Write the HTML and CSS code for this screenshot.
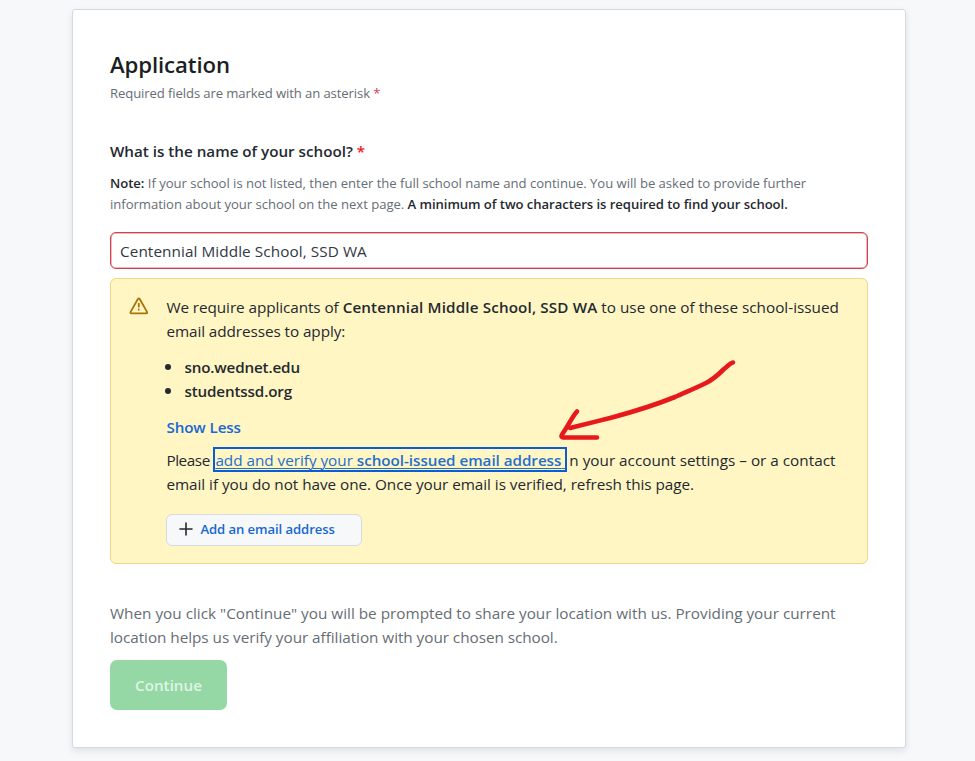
FILE: index.html
```html
<!DOCTYPE html>
<html lang="en">
<head>
<meta charset="utf-8">
<title>Application</title>
<link rel="stylesheet" href="styles.css">
</head>
<body>
<main class="card">
  <h1 class="title">Application</h1>
  <p class="required-note">Required fields are marked with an asterisk <span class="star">*</span></p>

  <label class="question" for="school">What is the name of your school? <span class="star star-strong">*</span></label>
  <p class="hint">
    <span class="line"><b class="hint-label">Note:</b> If your school is not listed, then enter the full school name and continue. You will be asked to provide further</span>
    <span class="line">information about your school on the next page. <b class="hint-strong">A minimum of two characters is required to find your school.</b></span>
  </p>
  <input class="field" id="school" type="text" value="Centennial Middle School, SSD WA">

  <section class="alert">
    <svg class="alert-icon" viewBox="0 0 20 20" fill="none" stroke="currentColor" stroke-width="1.8" stroke-linejoin="round" stroke-linecap="round">
      <path d="M8.900 3 Q9.800 1.600 10.700 3 L18 15.900 Q18.600 17.300 17.100 17.400 H2.500 Q1 17.300 1.600 15.900 Z"/>
      <path d="M9.800 7.600 V10.700 M9.800 13.500 V13.800"/>
    </svg>
    <div class="alert-body">
      <p class="text">
        <span class="line"><span class="tight">We require applicants of</span> <b class="school">Centennial Middle School, SSD WA</b> to use one of these school-issued</span>
        <span class="line tight">email addresses to apply:</span>
      </p>
      <ul class="domains">
        <li>sno.wednet.edu</li>
        <li>studentssd.org</li>
      </ul>
      <a class="toggle">Show Less</a>
      <p class="text instructions">
        <span class="line"><span class="please">Please</span> <a class="link">add and verify your <b>school-issued email address</b>&nbsp;</a>n your account settings – or a contact</span>
        <span class="line snug">email if you do not have one. Once your email is verified, refresh this page.</span>
      </p>
      <button class="add-button" type="button">
        <svg class="plus" viewBox="0 0 14 14" stroke="currentColor" stroke-width="1.6" stroke-linecap="round"><path d="M7 1V13M1 7H13"/></svg>
        Add an email address
      </button>
    </div>
    <svg class="arrow" viewBox="0 0 190 90" fill="none" stroke="#e8191c" stroke-width="4.6" stroke-linecap="round" stroke-linejoin="round">
      <path d="M183 12.500 C180 13 178 16 174 19 C168 25 162 30 156 33 C146 38 136 42 125 47 C105 55 75 64 62 67.500 C48 71 32 75 20 78"/>
      <path d="M27 61.500 C22 67 18 76 13 83 C10.500 86.500 11 87.500 15 87.500 H47"/>
    </svg>
  </section>

  <p class="text location">
    <span class="line">When you click "Continue" you will be prompted to share your location with us. Providing your current</span>
    <span class="line snug">location helps us verify your affiliation with your chosen school.</span>
  </p>
  <button class="continue" type="button">Continue</button>
</main>
</body>
</html>
```
FILE: styles.css
```css
* { box-sizing: border-box; }

body {
  margin: 0;
  height: 761px;
  overflow: hidden;
  background: #f6f8fa;
  color: #24292f;
  font: 15.3px/24.3px "Open Sans", "Noto Sans", sans-serif;
}

h1, p, ul { margin: 0; padding: 0; }
b { font-weight: 600; }

.card {
  width: 834px;
  height: 739px;
  margin: 9px 0 0 72px;
  padding: 39px 37px 0;
  background: #fff;
  border: 1px solid #d3dae1;
  border-radius: 3px;
  box-shadow: 0 3px 6px rgba(140, 149, 159, 0.22);
}

.line { display: block; white-space: nowrap; }
.tight { letter-spacing: -0.08px; }
.snug { letter-spacing: -0.045px; }
.star { color: #d3414c; }
.star-strong { color: #f5141c; }

.title {
  font-size: 22.2px;
  line-height: 32px;
  font-weight: 600;
  letter-spacing: -0.11px;
  color: #1b1f24;
}

.required-note {
  margin-top: 2px;
  font-size: 13.1px;
  line-height: 20px;
  letter-spacing: -0.1px;
  color: #666d75;
}

.question {
  display: block;
  margin-top: 35.5px;
  font-size: 15.2px;
  line-height: 24px;
  font-weight: 600;
}

.hint {
  margin-top: 10px;
  font-size: 13.1px;
  line-height: 21px;
  letter-spacing: -0.025px;
  color: #666d75;
}
.hint-label { color: #24292f; }
.hint-strong { color: #24292f; letter-spacing: -0.06px; }

.field {
  display: block;
  width: 100%;
  height: 37px;
  margin-top: 17.5px;
  padding: 1px 9px 0;
  font: inherit;
  letter-spacing: 0.08px;
  color: #32383f;
  background: #fff;
  border: 1px solid #d3414f;
  border-radius: 6px;
  box-shadow: inset 0 0 0 0.500px #e0707a;
  outline: none;
}

.alert {
  position: relative;
  display: flex;
  height: 285.500px;
  margin-top: 9px;
  padding: 16px 18px 0;
  background: #fff6c4;
  border: 1px solid #eed888;
  border-radius: 6px;
}
.alert-icon {
  width: 20px;
  height: 20px;
  margin-top: 0.500px;
  color: #a87309;
}
.alert-body { margin-left: 17.400px; }

.school { font-size: 15.2px; letter-spacing: 0.15px; }

.domains {
  margin-top: 10.600px;
  padding-left: 18px;
  font-size: 15.2px;
  font-weight: 600;
  letter-spacing: -0.14px;
}
.domains li { height: 24.300px; }
.domains li::marker { font-size: 18px; letter-spacing: 0; }

.toggle {
  display: block;
  margin-top: 11.800px;
  font-size: 15.2px;
  font-weight: 600;
  letter-spacing: -0.1px;
  color: #1768d3;
}

.instructions { margin-top: 8.700px; }
.please { letter-spacing: -0.42px; }
.link {
  margin: 0 2px 0 -0.500px;
  padding: 0.800px 0 0.800px;
  border: 2px solid #0b5cd5;
  color: #1f6fd0;
  letter-spacing: -0.03px;
  text-decoration: underline;
  text-decoration-thickness: 1px;
  text-underline-offset: 1.500px;
}
.link b { font-size: 15.2px; }

.add-button {
  display: flex;
  align-items: center;
  gap: 7px;
  width: 196px;
  height: 32px;
  margin-top: 17.700px;
  padding: 0 12px 1px;
  font: 600 13.1px/20px "Open Sans", "Noto Sans", sans-serif;
  letter-spacing: -0.07px;
  color: #1768d3;
  background: #f6f8fa;
  border: 1px solid #d5dbe1;
  border-radius: 6px;
}
.plus { width: 14px; height: 14px; color: #24292f; }

/* Hand-drawn annotation lying over the alert */
.arrow {
  position: absolute;
  left: 439px;
  top: 71px;
  width: 190px;
  height: 90px;
}

.location { margin-top: 37px; color: #666d75; }

.continue {
  display: block;
  width: 117px;
  height: 50.500px;
  margin-top: 10.700px;
  padding: 0;
  font: 600 15.2px/24px "Open Sans", "Noto Sans", sans-serif;
  color: #dff5e4;
  background: #95d8a6;
  border: 0;
  border-radius: 7px;
}
```
